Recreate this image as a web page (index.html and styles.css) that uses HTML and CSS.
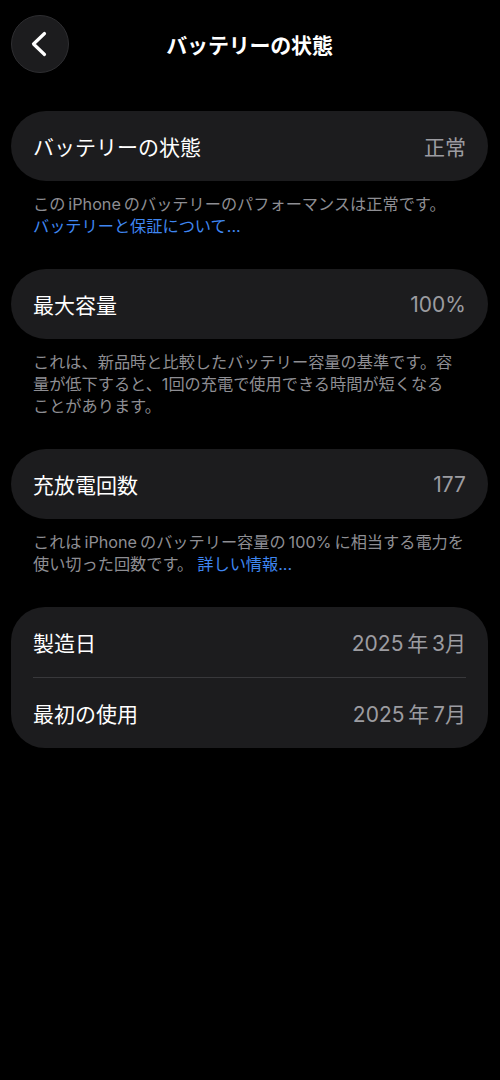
FILE: index.html
```html
<!DOCTYPE html>
<html lang="ja">
<head>
    <meta charset="UTF-8">
    <meta name="viewport" content="width=device-width, initial-scale=1.0">
    <title>バッテリーの状態</title>
    <link rel="stylesheet" href="styles.css">
</head>
<body>
    <div class="screen">
        <header class="nav-bar">
            <button class="back-button" aria-label="戻る">
                <svg width="18" height="26" viewBox="0 0 18 26">
                    <polyline points="14.5,2.5 3.5,13 14.5,23.5" fill="none" stroke="#fff" stroke-width="3.2" stroke-linecap="round" stroke-linejoin="round"/>
                </svg>
            </button>
            <h1 class="nav-title">バッテリーの状態</h1>
            <span></span>
        </header>

        <div class="card">
            <span class="label">バッテリーの状態</span>
            <span class="value">正常</span>
        </div>
        <p class="note">この&#8201;iPhone&#8201;のバッテリーのパフォーマンスは正常です。<br><a href="#">バッテリーと保証について...</a></p>

        <div class="card">
            <span class="label">最大容量</span>
            <span class="value">100%</span>
        </div>
        <p class="note">これは、新品時と比較したバッテリー容量の基準です。容<br>量が低下すると、1回の充電で使用できる時間が短くなる<br>ことがあります。</p>

        <div class="card">
            <span class="label">充放電回数</span>
            <span class="value">177</span>
        </div>
        <p class="note">これは&#8201;iPhone&#8201;のバッテリー容量の&#8201;100%&#8201;に相当する電力を<br>使い切った回数です。<a class="more" href="#">詳しい情報...</a></p>

        <div class="group">
            <div class="row">
                <span class="label">製造日</span>
                <span class="value">2025&#8201;年&#8201;3月</span>
            </div>
            <div class="row">
                <span class="label">最初の使用</span>
                <span class="value">2025&#8201;年&#8201;7月</span>
            </div>
        </div>
    </div>
</body>
</html>
```

FILE: styles.css
```css
body {
    margin: 0;
    padding: 0;
    background: #000;
    color: #fff;
    font-family: "Inter", "Noto Sans CJK JP", sans-serif;
}
.screen {
    padding: 15px 12px 40px 11px;
}
.nav-bar {
    display: grid;
    grid-template-columns: 58px 1fr 58px;
    align-items: center;
    height: 58px;
    margin-bottom: 38px;
}
.back-button {
    width: 58px;
    height: 58px;
    border-radius: 50%;
    background: #1c1c1e;
    border: 1px solid #2e2e31;
    padding: 0 3px 0 0;
    display: flex;
    align-items: center;
    justify-content: center;
    cursor: pointer;
}
.nav-title {
    margin: 0;
    text-align: center;
    font-size: 21px;
    font-weight: 700;
    letter-spacing: -0.2px;
}
.card {
    height: 70px;
    padding: 0 22px;
    background: #1c1c1e;
    border-radius: 35px;
    display: flex;
    align-items: center;
    justify-content: space-between;
}
.label {
    font-size: 21px;
    color: #fff;
}
.value {
    font-size: 21px;
    color: #9c9ca1;
}
.note {
    margin: 12px 0 32px;
    padding: 0 20px 0 22px;
    font-size: 16.2px;
    line-height: 22px;
    color: #8e8e93;
}
.note a {
    color: #3f86f0;
    text-decoration: none;
}
.note .more {
    margin-left: 4px;
}
.group {
    background: #1c1c1e;
    border-radius: 34px;
    padding: 0 22px;
}
.row {
    height: 70px;
    display: flex;
    align-items: center;
    justify-content: space-between;
}
.row + .row {
    border-top: 1px solid #38383b;
}
```
